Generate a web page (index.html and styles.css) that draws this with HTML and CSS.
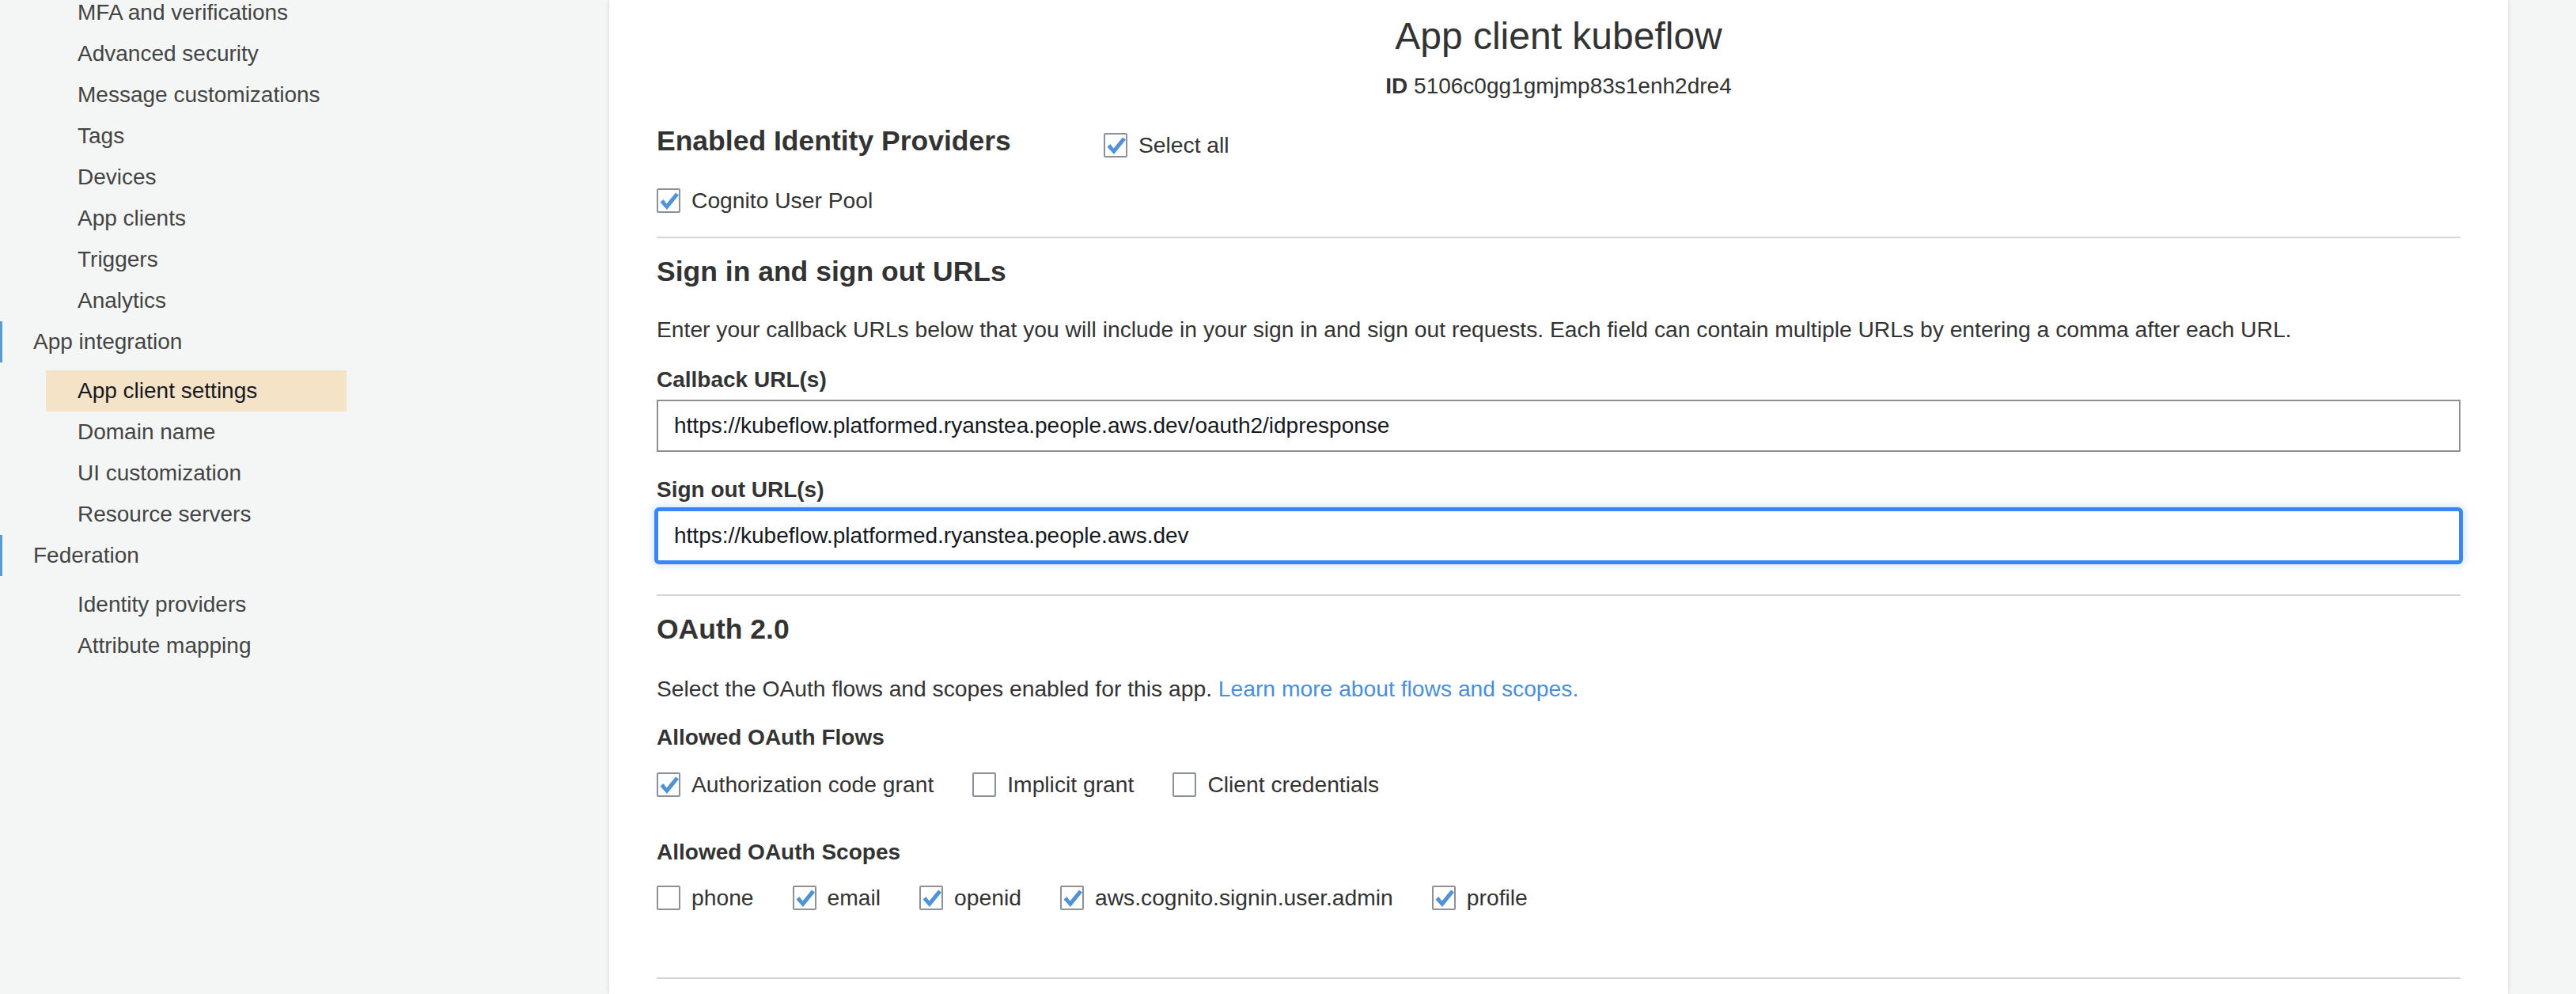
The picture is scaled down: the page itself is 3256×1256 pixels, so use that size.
FILE: index.html
```html
<!DOCTYPE html>
<html lang="en">
<head>
<meta charset="utf-8">
<title>App client settings</title>
<link rel="stylesheet" href="styles.css">
</head>
<body>
<div class="layout">
  <nav class="sidebar">
    <ul class="nav">
      <li class="nav-group">
        <ul class="sub">
          <li class="item">MFA and verifications</li>
          <li class="item">Advanced security</li>
          <li class="item">Message customizations</li>
          <li class="item">Tags</li>
          <li class="item">Devices</li>
          <li class="item">App clients</li>
          <li class="item">Triggers</li>
          <li class="item">Analytics</li>
        </ul>
      </li>
      <li class="nav-group">
        <div class="group-title">App integration</div>
        <ul class="sub padded">
          <li class="item active">App client settings</li>
          <li class="item">Domain name</li>
          <li class="item">UI customization</li>
          <li class="item">Resource servers</li>
        </ul>
      </li>
      <li class="nav-group">
        <div class="group-title">Federation</div>
        <ul class="sub padded">
          <li class="item">Identity providers</li>
          <li class="item">Attribute mapping</li>
        </ul>
      </li>
    </ul>
  </nav>

  <main class="panel">
    <h1 class="title">App client kubeflow</h1>
    <div class="client-id"><b>ID</b> 5106c0gg1gmjmp83s1enh2dre4</div>

    <div class="idp-row">
      <h2 class="heading idp-heading">Enabled Identity Providers</h2>
      <label class="check select-all"><span class="cb checked"><svg viewBox="0 0 30 30"><path d="M4.5 16.5 L8.5 13 L12.5 18.5 L24 4.5 L28 7.5 L13 26 Z"/></svg></span>Select all</label>
    </div>
    <div class="check-row first-row">
      <label class="check"><span class="cb checked"><svg viewBox="0 0 30 30"><path d="M4.5 16.5 L8.5 13 L12.5 18.5 L24 4.5 L28 7.5 L13 26 Z"/></svg></span>Cognito User Pool</label>
    </div>

    <div class="divider first-divider"></div>

    <h2 class="heading">Sign in and sign out URLs</h2>
    <p class="desc">Enter your callback URLs below that you will include in your sign in and sign out requests. Each field can contain multiple URLs by entering a comma after each URL.</p>
    <div class="field-label callback-label">Callback URL(s)</div>
    <input class="text-input" type="text" value="https://kubeflow.platformed.ryanstea.people.aws.dev/oauth2/idpresponse">
    <div class="field-label gap-lg">Sign out URL(s)</div>
    <input class="text-input focused" type="text" value="https://kubeflow.platformed.ryanstea.people.aws.dev">

    <div class="divider after-input"></div>

    <h2 class="heading">OAuth 2.0</h2>
    <p class="desc oauth-desc">Select the OAuth flows and scopes enabled for this app. <a class="link" href="#">Learn more about flows and scopes.</a></p>

    <div class="field-label">Allowed OAuth Flows</div>
    <div class="check-row">
      <label class="check"><span class="cb checked"><svg viewBox="0 0 30 30"><path d="M4.5 16.5 L8.5 13 L12.5 18.5 L24 4.5 L28 7.5 L13 26 Z"/></svg></span>Authorization code grant</label>
      <label class="check"><span class="cb"></span>Implicit grant</label>
      <label class="check"><span class="cb"></span>Client credentials</label>
    </div>

    <div class="field-label scopes-label">Allowed OAuth Scopes</div>
    <div class="check-row scopes-row">
      <label class="check"><span class="cb"></span>phone</label>
      <label class="check"><span class="cb checked"><svg viewBox="0 0 30 30"><path d="M4.5 16.5 L8.5 13 L12.5 18.5 L24 4.5 L28 7.5 L13 26 Z"/></svg></span>email</label>
      <label class="check"><span class="cb checked"><svg viewBox="0 0 30 30"><path d="M4.5 16.5 L8.5 13 L12.5 18.5 L24 4.5 L28 7.5 L13 26 Z"/></svg></span>openid</label>
      <label class="check"><span class="cb checked"><svg viewBox="0 0 30 30"><path d="M4.5 16.5 L8.5 13 L12.5 18.5 L24 4.5 L28 7.5 L13 26 Z"/></svg></span>aws.cognito.signin.user.admin</label>
      <label class="check"><span class="cb checked"><svg viewBox="0 0 30 30"><path d="M4.5 16.5 L8.5 13 L12.5 18.5 L24 4.5 L28 7.5 L13 26 Z"/></svg></span>profile</label>
    </div>

    <div class="divider last"></div>
  </main>
</div>
</body>
</html>
```
FILE: styles.css
```css
html, body {
  margin: 0;
  padding: 0;
}
body {
  background: #f4f6f6;
  font-family: "Liberation Sans", Arial, Helvetica, sans-serif;
  color: #333;
  height: 1256px;
  overflow: hidden;
}
.layout {
  display: flex;
  align-items: stretch;
  min-height: 1256px;
}

/* Sidebar */
.sidebar {
  width: 770px;
  flex: none;
}
.nav {
  list-style: none;
  margin: -10px 0 0 0;
  padding: 0;
}
.nav-group {
  margin: 0;
  padding: 0;
}
.group-title {
  height: 52px;
  line-height: 52px;
  font-size: 28px;
  color: #444;
  padding-left: 39px;
  border-left: 3px solid #5b9bd5;
}
.sub {
  list-style: none;
  margin: 0;
  padding: 0;
}
.sub.padded {
  padding-top: 10px;
}
.item {
  width: 380px;
  margin-left: 58px;
  padding-left: 40px;
  box-sizing: border-box;
  height: 52px;
  line-height: 52px;
  font-size: 28px;
  color: #444;
  white-space: nowrap;
}
.item.active {
  background: #f5e3c8;
  color: #16191f;
}

/* Panel */
.panel {
  width: 2400px;
  flex: none;
  box-sizing: border-box;
  background: #fff;
  padding: 18px 60px 0 60px;
  box-shadow: 0 0 6px rgba(0, 0, 0, 0.13);
}
.title {
  margin: 0;
  font-size: 48px;
  line-height: 56px;
  font-weight: 400;
  text-align: center;
  color: #333;
}
.client-id {
  margin-top: 15px;
  font-size: 28px;
  line-height: 40px;
  text-align: center;
  color: #333;
}
.client-id b {
  font-weight: 700;
}
.heading {
  margin: 20px 0 0 0;
  font-size: 35.5px;
  line-height: 44px;
  font-weight: 700;
  color: #333;
}
.idp-row {
  display: flex;
  align-items: flex-start;
  margin-top: 27px;
}
.idp-heading {
  margin: 0;
  width: 565px;
  flex: none;
}
.select-all {
  margin-top: 7px;
}
.desc {
  margin: 31px 0 0 0;
  font-size: 28.25px;
  line-height: 40px;
  color: #333;
}
.desc.oauth-desc {
  margin-top: 33px;
}
.link {
  color: #4a8fd9;
  text-decoration: none;
}
.field-label {
  margin-top: 22px;
  font-size: 28px;
  line-height: 40px;
  font-weight: 700;
  color: #333;
}
.field-label.callback-label {
  margin-top: 24px;
}
.field-label.gap-lg {
  margin-top: 28px;
}
.field-label.scopes-label {
  margin-top: 46px;
}
.text-input {
  display: block;
  width: 100%;
  height: 66px;
  margin: 5px 0 0 0;
  box-sizing: border-box;
  border: 2px solid #8e8e8e;
  border-radius: 0;
  padding: 0 20px;
  font-family: "Liberation Sans", Arial, Helvetica, sans-serif;
  font-size: 28px;
  color: #16191f;
  background: #fff;
  outline: none;
}
.text-input.focused {
  border-color: #3b86f7;
  border-radius: 3px;
  box-shadow: 0 0 0 3px #3b86f7, 0 0 10px 5px rgba(59, 134, 247, 0.22);
}

.divider {
  margin-top: 28px;
  border-top: 2px solid #d5d5d5;
}
.divider.first-divider {
  margin-top: 26px;
}
.divider.after-input {
  margin-top: 41px;
}
.divider.last {
  margin-top: 81px;
}

.check-row {
  display: flex;
  align-items: center;
  margin-top: 19px;
}
.check-row.first-row {
  margin-top: 30px;
}
.check-row.scopes-row {
  margin-top: 17px;
}
.check {
  display: flex;
  align-items: center;
  gap: 14px;
  font-size: 28.25px;
  line-height: 40px;
  color: #333;
  margin-right: 49px;
  white-space: nowrap;
}
.cb {
  display: block;
  flex: none;
  width: 30px;
  height: 31px;
  box-sizing: border-box;
  border: 2px solid #8d9196;
  border-radius: 2px;
  background: #fff;
}
.cb svg {
  display: block;
  width: 30px;
  height: 30px;
  margin: -1px 0 0 -2px;
  fill: #4f93d6;
}
```
